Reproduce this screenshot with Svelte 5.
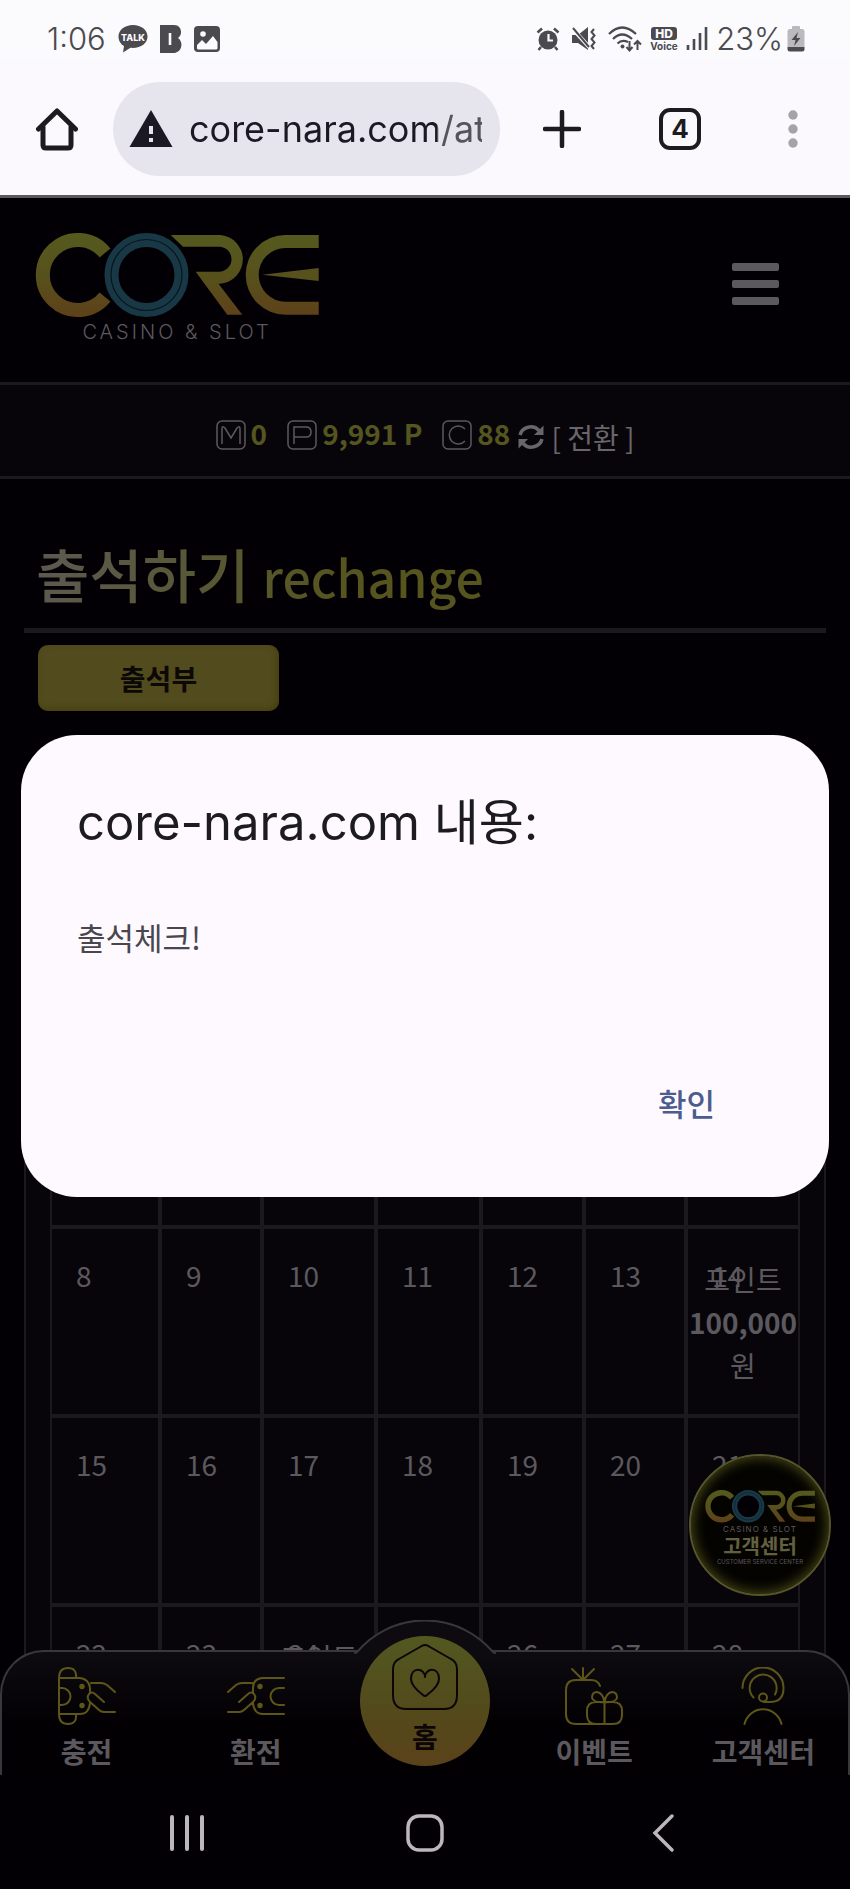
<script lang="ts">
  interface Day {
    date: number;
    bonus?: string;
  }

  const WEEKDAYS = ['일', '월', '화', '수', '목', '금', '토'];
  const COL_WIDTHS = [110, 102, 114, 105, 103, 102, 114];
  const COL_TOTAL = COL_WIDTHS.reduce((a, b) => a + b, 0);
  const BONUS: Record<number, string> = { 14: '100,000', 24: '100,000' };

  const weeks: Day[][] = [0, 1, 2, 3].map((week) =>
    WEEKDAYS.map((_, i) => {
      const date = week * 7 + i + 1;
      return { date, bonus: BONUS[date] };
    })
  );

  let url = $state('core-nara.com/at');
  let dialogOpen = $state(true);
</script>

{#snippet coreLogo(id: string)}
  <svg class="core-logo" viewBox="0 0 284 84" role="img" aria-label="CORE">
    <defs>
      <linearGradient id="{id}-gold" gradientUnits="userSpaceOnUse" x1="0" y1="0" x2="0" y2="84">
        <stop offset="0" stop-color="#555a1e" />
        <stop offset="0.55" stop-color="#57501c" />
        <stop offset="1" stop-color="#5f4019" />
      </linearGradient>
    </defs>
    <path d="M70 20A35 35 0 1 0 70 64" fill="none" stroke="url(#{id}-gold)" stroke-width="14" />
    <g fill="url(#{id}-gold)">
      <path d="M135.700 2H185A24.400 24.400 0 0 1 185 50.700H183.500L207.300 81.700H192.300L160.700 38.700H184A12.500 12.500 0 0 0 184 13.700H148Z" />
      <path d="M283.700 2H250.500A39.850 39.850 0 0 0 250.500 81.700H283.700V68.700H250.500A26.850 26.850 0 0 1 250.500 15H283.700Z" />
      <path d="M227.300 41.700L283.700 35V48Z" />
    </g>
    <circle cx="111.500" cy="42" r="44" fill="#020004" />
    <circle cx="111.500" cy="42" r="35" fill="none" stroke="#193845" stroke-width="14" />
    <circle cx="111.500" cy="42" r="35.500" fill="none" stroke="#07161d" stroke-width="1.200" />
  </svg>
{/snippet}

<div class="screen">
  <header class="status-bar">
    <div class="status-group">
      <span class="clock">1:06</span>
      <svg class="talk" width="30" height="28" viewBox="0 0 30 28" aria-hidden="true">
        <path d="M15 0C6.700 0 .500 5 .500 11.500c0 4.500 2.300 7.600 5.500 9.600L5 27.500l7.500-4.700c9.500 1 17-4.100 17-11.300C29.500 5 23.300 0 15 0Z" fill="#4b4a4e" />
        <text x="15" y="15.500" text-anchor="middle" font-size="9" font-weight="800" fill="#fcfbfe">TALK</text>
      </svg>
      <svg class="bank" width="22" height="28" viewBox="0 0 22 28" aria-hidden="true">
        <path d="M0 0H14C22 0 23 10 18 13C24 17 22 28 13 28H0Z" fill="#4b4a4e" />
        <path d="M10 8V20" stroke="#fcfbfe" stroke-width="2.600" />
      </svg>
      <svg width="26" height="26" viewBox="0 0 26 26" aria-hidden="true">
        <rect width="26" height="26" rx="4" fill="#4b4a4e" />
        <circle cx="9" cy="8" r="2.800" fill="#fcfbfe" />
        <path d="M3 19L8 14L12 18L19 10L23.500 16V22Q23.500 23.500 22 23.500H4.500Q3 23.500 3 22Z" fill="#fcfbfe" />
      </svg>
    </div>
    <div class="status-group right">
      <svg class="spaced" width="24" height="24" viewBox="0 0 24 24" aria-hidden="true">
        <circle cx="12" cy="13" r="9.500" fill="#4b4a4e" />
        <path d="M1.500 5.500L6 1.500M22.500 5.500L18 1.500M5 20L2.500 23M19 20L21.500 23" stroke="#4b4a4e" stroke-width="2.500" />
        <path d="M12.500 7V13.500H17" fill="none" stroke="#fcfbfe" stroke-width="2.200" />
      </svg>
      <svg class="spaced" width="24" height="24" viewBox="0 0 24 24" aria-hidden="true">
        <path d="M0 8H6L16 0V23L6 16H0Z" fill="#4b4a4e" />
        <path d="M0 1L18 21" stroke="#fcfbfe" stroke-width="4" />
        <path d="M1 1L17 20" stroke="#4b4a4e" stroke-width="2" />
        <path d="M22 2L19.500 5L22.500 8.500L19.500 12L22.500 15.500L19.500 19L22 22" fill="none" stroke="#4b4a4e" stroke-width="2" />
      </svg>
      <svg width="34" height="26" viewBox="0 0 34 26" aria-hidden="true">
        <path d="M1 8Q14 -5 28 8M5 13Q14 4 24 13M9.500 17.500Q14 13 20 16" fill="none" stroke="#4b4a4e" stroke-width="2.300" />
        <circle cx="14.500" cy="20.500" r="2" fill="#4b4a4e" />
        <path d="M21.500 15V24M18.500 21L21.500 24.500L24.500 21M29.500 24V15M26 18.500L29.500 15L33 18.500" fill="none" stroke="#4b4a4e" stroke-width="2" />
      </svg>
      <svg width="28" height="26" viewBox="0 0 28 26" aria-hidden="true">
        <rect x="1" y="1" width="26" height="13" rx="3" fill="#4b4a4e" />
        <text x="14" y="12" text-anchor="middle" font-size="12" font-weight="800" fill="#fcfbfe">HD</text>
        <text x="14" y="24" text-anchor="middle" font-size="10" font-weight="700" fill="#4b4a4e">Voice</text>
      </svg>
      <svg width="22" height="24" viewBox="0 0 22 24" aria-hidden="true">
        <path d="M2 18V23M8 12V23M14 6V23M20 0V23" stroke="#4b4a4e" stroke-width="2.600" />
      </svg>
      <span class="clock">23%</span>
      <svg class="battery" width="18" height="26" viewBox="0 0 18 26" aria-hidden="true">
        <path d="M5 3V1Q5 0 6 0H12Q13 0 13 1V3H15Q17.500 3 17.500 5.500V21H.500V5.500Q.500 3 3 3Z" fill="#bbb9be" />
        <path d="M.500 21H17.500V23Q17.500 25.500 15 25.500H3Q.500 25.500 .500 23Z" fill="#4b4a4e" />
        <path d="M11 6L4.500 14H8.500L7 20L13.500 12H9.500Z" fill="#4b4a4e" />
      </svg>
    </div>
  </header>

  <div class="toolbar">
    <button class="icon-button" aria-label="홈페이지">
      <svg width="44" height="44" viewBox="0 0 44 44" fill="none" stroke="#1c1b1f" stroke-width="5" stroke-linecap="round" stroke-linejoin="round">
        <path d="M3.500 22L22 4L40.500 22" />
        <path d="M8 20V38Q8 41 11 41H33Q36 41 36 38V20" />
      </svg>
    </button>
    <div class="address">
      <svg width="44" height="38" viewBox="0 0 44 38" aria-hidden="true">
        <path d="M22 0L43.500 37H.500Z" fill="#1b1a24" />
        <path d="M22 16V24M22 28V32" stroke="#e6e5ed" stroke-width="4" />
      </svg>
      <input class="url" type="text" aria-label="주소" bind:value={url} />
    </div>
    <button class="icon-button" aria-label="새 탭">
      <svg width="38" height="38" viewBox="0 0 38 38">
        <path d="M19 2V36M2 19H36" stroke="#1c1b1f" stroke-width="4.500" stroke-linecap="round" />
      </svg>
    </button>
    <button class="tab-count" aria-label="탭 4개">4</button>
    <button class="icon-button" aria-label="메뉴">
      <svg width="28" height="38" viewBox="0 0 28 38" fill="#a5a3aa">
        <circle cx="14" cy="5" r="4.700" />
        <circle cx="14" cy="19" r="4.700" />
        <circle cx="14" cy="33" r="4.700" />
      </svg>
    </button>
  </div>

  <main class="site">
    <div class="site-header">
      <a class="brand" href="#home">
        {@render coreLogo('brand')}
        <span class="tagline">CASINO &amp; SLOT</span>
      </a>
      <button class="hamburger" aria-label="전체 메뉴">
        <span></span><span></span><span></span>
      </button>
    </div>

    <div class="balance">
      <span class="coin">
        <svg width="30" height="30" viewBox="0 0 30 30" role="img" aria-label="M">
          <rect x="1" y="1" width="28" height="28" rx="5" />
          <path d="M6 24V9Q6 5 9 8L15 18L21 8Q24 5 24 9V24" />
        </svg>
        <b>0</b>
      </span>
      <span class="coin">
        <svg width="30" height="30" viewBox="0 0 30 30" role="img" aria-label="P">
          <rect x="1" y="1" width="28" height="28" rx="5" />
          <path d="M7 24V7H19Q24 7 24 12T19 17H7" />
        </svg>
        <b>9,991 P</b>
      </span>
      <span class="coin">
        <svg width="30" height="30" viewBox="0 0 30 30" role="img" aria-label="C">
          <rect x="1" y="1" width="28" height="28" rx="5" />
          <path d="M23 9A9 9 0 1 0 23 21" />
        </svg>
        <b>88</b>
      </span>
      <button class="convert">
        <svg width="28" height="28" viewBox="0 0 28 28" aria-hidden="true">
          <path d="M3 12A11 10.500 0 0 1 22 7.500M25 16A11 10.500 0 0 1 6 20.500" fill="none" stroke="#69666b" stroke-width="3.500" />
          <path d="M26.500 2.500V12H17ZM1.500 25.500V16H11Z" fill="#69666b" />
        </svg>
        [ 전환 ]
      </button>
    </div>

    <section class="content">
      <h1>출석하기 <small>rechange</small></h1>
      <button class="book">출석부</button>

      <div class="calendar">
        <table>
          <colgroup>
            {#each COL_WIDTHS as width}
              <col style="width: {(width / COL_TOTAL) * 100}%" />
            {/each}
          </colgroup>
          <thead>
            <tr>
              {#each WEEKDAYS as day}
                <th scope="col">{day}</th>
              {/each}
            </tr>
          </thead>
          <tbody>
            {#each weeks as week}
              <tr>
                {#each week as day (day.date)}
                  <td>
                    {day.date}
                    {#if day.bonus}
                      <div class="bonus">포인트 <b>{day.bonus}</b> 원</div>
                    {/if}
                  </td>
                {/each}
              </tr>
            {/each}
          </tbody>
        </table>
      </div>
    </section>

    <a class="support" href="#support">
      {@render coreLogo('support')}
      <span class="support-tag">CASINO &amp; SLOT</span>
      <strong>고객센터</strong>
      <span class="support-sub">CUSTOMER SERVICE CENTER</span>
    </a>

    <nav class="tabs">
      <svg class="bump" width="142" height="34" viewBox="0 0 142 34" aria-hidden="true">
        <path d="M0 34L3 32A89 89 0 0 1 139 32L142 34Z" fill="#0d0b0f" />
        <path d="M0 33Q2 33 3 32A89 89 0 0 1 139 32Q140 33 142 33" fill="none" stroke="#39373b" stroke-width="2" />
      </svg>
      <a href="#deposit">
        <svg width="58" height="58" viewBox="0 0 58 58" aria-hidden="true">
          <path d="M1 11V47M1 11H22Q31 12 32 21V26M32 36Q31 47 22 47H1M1 11Q1 1 10 1T18 11M1 47Q1 57 10 57T18 47M1 21H4A8.500 8.500 0 0 1 4 38H1M33 16H43Q46 16 49 18L57 25M46 35L37 27Q34 24 31 27Q28 31 32 35L41 43Q43 45 46 45H57" />
          <circle cx="24" cy="19.500" r="2.700" class="dot" />
          <circle cx="24" cy="38.500" r="2.700" class="dot" />
        </svg>
        <span>충전</span>
      </a>
      <a href="#withdraw">
        <svg width="58" height="58" viewBox="0 0 58 58" aria-hidden="true">
          <path d="M57 11H35Q26 12 26 21V26M26 36Q27 47 36 47H57M57 21H52A8.500 8.500 0 0 0 52 38H57M25 16H15Q12 16 9 18L1 25M12 35L21 27Q24 24 27 27Q30 31 26 35L17 43Q15 45 12 45H1" />
          <circle cx="33" cy="19.500" r="2.700" class="dot" />
          <circle cx="33" cy="38.500" r="2.700" class="dot" />
        </svg>
        <span>환전</span>
      </a>
      <a class="home" href="#home">
        <svg width="66" height="66" viewBox="0 0 66 66" aria-hidden="true">
          <path d="M28 3Q33 -1 38 3L59 15Q65 18 65 25V51Q65 65 52 65H14Q1 65 1 51V25Q1 18 7 15Z" />
          <path d="M33 33C33 24 19 22 19 35C19 42 27 48 31 51Q33 53 35 51C39 48 47 42 47 35C47 22 33 24 33 33Z" />
        </svg>
        <span>홈</span>
      </a>
      <a href="#event">
        <svg width="58" height="58" viewBox="0 0 58 58" aria-hidden="true">
          <path d="M35 19Q33 13 26 13H11Q1 13 1 23V47Q1 57 11 57H48Q57 57 57 48V44Q57 35 48 35H31Q22 35 22 44V48Q22 57 31 57M18 1V13L7 2M18 13L29 2M39.500 57V35Q29 36 27 31Q27 25 32 25Q38 26 39.500 35Q41 26 47 25Q52 25 52 31Q50 36 39.500 35" />
        </svg>
        <span>이벤트</span>
      </a>
      <a href="#support">
        <svg width="58" height="58" viewBox="0 0 58 58" aria-hidden="true">
          <path d="M8.500 21A20.500 20.500 0 0 1 49.500 21Q49.500 35 36 35H30M19.500 30.500A13.500 13.500 0 1 1 41 27.500M10.500 57A19 19 0 0 1 47.500 57" />
          <circle cx="29" cy="30.500" r="4" />
        </svg>
        <span>고객센터</span>
      </a>
    </nav>
  </main>

  <footer class="system-nav">
    <button class="icon-button" aria-label="최근 앱">
      <svg width="38" height="40" viewBox="0 0 38 40">
        <path d="M4 4V36M19 4V36M34 4V36" stroke="#bbb7bd" stroke-width="4" stroke-linecap="round" />
      </svg>
    </button>
    <button class="icon-button" aria-label="홈">
      <svg width="38" height="38" viewBox="0 0 38 38">
        <rect x="2" y="2" width="34" height="34" rx="11" fill="none" stroke="#bbb7bd" stroke-width="3.500" />
      </svg>
    </button>
    <button class="icon-button" aria-label="뒤로">
      <svg width="24" height="40" viewBox="0 0 24 40">
        <path d="M21 3L4 20L21 37" fill="none" stroke="#bbb7bd" stroke-width="3.500" stroke-linecap="round" />
      </svg>
    </button>
  </footer>

  {#if dialogOpen}
    <div class="overlay">
      <div class="dialog" role="alertdialog" aria-modal="true" aria-labelledby="dialog-title" aria-describedby="dialog-text">
        <h2 id="dialog-title">core-nara.com 내용:</h2>
        <p id="dialog-text">출석체크!</p>
        <button class="confirm" onclick={() => (dialogOpen = false)}>확인</button>
      </div>
    </div>
  {/if}
</div>

<style>
  :global(body) {
    margin: 0;
    background: #020004;
  }

  .screen {
    position: relative;
    display: flex;
    flex-direction: column;
    height: 100vh;
    overflow: hidden;
    background: #020004;
    font-family: 'Noto Sans CJK KR', sans-serif;
  }

  .screen *,
  .screen {
    box-sizing: border-box;
  }

  button {
    padding: 0;
    border: 0;
    background: none;
    font: inherit;
    cursor: pointer;
  }

  a {
    color: inherit;
    text-decoration: none;
  }

  svg {
    display: block;
    flex: none;
  }

  .icon-button {
    display: flex;
  }

  /* phone status bar */
  .status-bar {
    display: flex;
    justify-content: space-between;
    align-items: flex-end;
    flex: none;
    height: 60px;
    padding: 0 45px 0 47px;
    background: #fbfafd;
    color: #4b4a4e;
    font-family: Inter, sans-serif;
  }

  .status-group {
    display: flex;
    align-items: center;
    gap: 12px;
    height: 42px;
  }

  .status-group.right {
    gap: 8px;
  }

  .status-group .spaced {
    margin-right: 4px;
  }

  .clock {
    font-size: 31px;
    line-height: 40px;
    font-weight: 300;
  }

  .status-group.right .battery {
    margin-left: -4px;
  }

  /* browser toolbar */
  .toolbar {
    display: flex;
    align-items: center;
    flex: none;
    height: 138px;
    padding: 3px 43px 0 35px;
    border-bottom: 3px solid #5b595e;
    background: #fbf9fe;
  }

  .address {
    display: flex;
    align-items: center;
    gap: 16px;
    flex: 1;
    min-width: 0;
    height: 94px;
    margin: 0 43px 0 34px;
    padding: 0 18px 0 16px;
    border-radius: 47px;
    background: #e6e5ed;
  }

  .url {
    flex: 1;
    min-width: 0;
    height: 60px;
    padding: 0;
    border: 0;
    outline: 0;
    background: linear-gradient(90deg, #1b1a24 248px, #55545c 248px);
    background-clip: text;
    color: transparent;
    font: 400 36px Inter, sans-serif;
  }

  .tab-count {
    flex: none;
    width: 42px;
    height: 42px;
    margin: 0 78px;
    border: 4px solid #1c1b1f;
    border-radius: 11px;
    color: #1c1b1f;
    font: 700 26px/34px Inter, sans-serif;
  }

  /* site */
  .site {
    position: relative;
    flex: 1;
    min-height: 0;
    overflow: hidden;
    color: #5c595e;
  }

  .site-header {
    display: flex;
    justify-content: space-between;
    align-items: flex-start;
    height: 184px;
    padding: 35px 71px 0 35px;
  }

  .brand {
    display: flex;
    flex-direction: column;
    align-items: center;
    width: 284px;
  }

  .core-logo {
    width: 100%;
  }

  .tagline {
    font: 300 20px/30px Inter, sans-serif;
    letter-spacing: 3px;
  }

  .hamburger {
    display: grid;
    gap: 9px;
    width: 47px;
    margin-top: 30px;
  }

  .hamburger span {
    height: 8px;
    border-radius: 2px;
    background: #5b595d;
  }

  .balance {
    display: flex;
    justify-content: center;
    align-items: center;
    height: 97px;
    padding-top: 8px;
    border-top: 3px solid #1b191d;
    border-bottom: 3px solid #1b191d;
    background: #08050a;
    font-size: 28px;
    line-height: 40px;
  }

  .coin {
    display: flex;
    align-items: center;
    gap: 5px;
    margin-right: 20px;
  }

  .coin:nth-child(3) {
    margin-right: 7px;
  }

  .coin svg {
    fill: none;
    stroke: #5c595e;
    stroke-width: 1.5;
  }

  .coin b {
    padding-bottom: 4px;
    color: #55551f;
  }

  .convert {
    display: flex;
    align-items: center;
    gap: 6px;
    padding-top: 4px;
    color: #69666b;
    font-size: 28px;
    line-height: 36px;
  }

  .content {
    padding: 44px 24px 0;
  }

  h1 {
    margin: 0;
    padding: 8px 12px 10px;
    border-bottom: 5px solid #1b191d;
    font-size: 58px;
    line-height: 84px;
    font-weight: 500;
    color: transparent;
    background: linear-gradient(90deg, #5c5a52 0, #56572e 220px, #56541f 320px);
    background-clip: text;
  }

  h1 small {
    font-size: 50px;
    font-weight: 500;
  }

  .book {
    display: block;
    width: 241px;
    height: 66px;
    margin: 12px 14px 0;
    border-radius: 10px;
    background: #524b1d;
    box-shadow: inset -2px -2px 6px #45400f;
    color: #0c0806;
    font-size: 28px;
    font-weight: 700;
  }

  .calendar {
    margin-top: 221px;
    padding: 24px;
    border: 2px solid #1b191d;
    background: #08050a;
  }

  table {
    width: 100%;
    table-layout: fixed;
    border-spacing: 0;
    font-size: 28px;
    line-height: 40px;
  }

  th {
    height: 80px;
    padding: 0;
    border: 2px solid #1b191d;
    font-weight: 400;
  }

  td {
    position: relative;
    height: 189px;
    padding: 26px 0 0 24px;
    border: 2px solid #1b191d;
    vertical-align: top;
  }

  .bonus {
    position: absolute;
    inset: 0;
    padding-top: 29px;
    line-height: 43px;
    text-align: center;
  }

  /* floating support badge */
  .support {
    position: absolute;
    right: 19px;
    bottom: 179px;
    display: flex;
    flex-direction: column;
    align-items: center;
    width: 142px;
    height: 142px;
    padding: 34px 14px 0;
    border: 2px solid #55552a;
    border-radius: 50%;
    background: #040300;
    box-shadow: inset 0 0 14px #5a5b1c;
  }

  .support-tag {
    font: 400 8px/12px Inter, sans-serif;
    letter-spacing: 1px;
  }

  .support strong {
    color: #62603f;
    font-size: 20px;
    line-height: 22px;
  }

  .support-sub {
    font: 400 6px/10px Inter, sans-serif;
    white-space: nowrap;
  }

  /* bottom tabs */
  .tabs {
    position: absolute;
    inset: auto 0 0;
    display: grid;
    grid-template-columns: repeat(5, 1fr);
    height: 125px;
    border: 2px solid #39373b;
    border-bottom: 0;
    border-radius: 44px 44px 0 0;
    background: linear-gradient(#0d0b0f, #030004 60%);
    font-size: 28px;
    line-height: 40px;
    font-weight: 700;
  }

  .tabs a {
    display: flex;
    flex-direction: column;
    align-items: center;
    gap: 6px;
    padding-top: 15px;
    white-space: nowrap;
  }

  .tabs a svg {
    fill: none;
    stroke: #5e5619;
    stroke-width: 2;
    stroke-linecap: round;
    stroke-linejoin: round;
  }

  .tabs .dot {
    fill: #5e5619;
    stroke: none;
  }

  .bump {
    position: absolute;
    left: 50%;
    bottom: 100%;
    margin: 0 0 -2px -71px;
  }

  .tabs .home {
    position: relative;
    justify-self: center;
    width: 130px;
    height: 130px;
    margin-top: -16px;
    padding-top: 8px;
    border-radius: 50%;
    background: linear-gradient(#525820, #53491b 60%, #5b421a);
    color: #0c0608;
  }

  .tabs .home svg {
    stroke: #0c0608;
  }

  /* system navigation */
  .system-nav {
    display: grid;
    grid-template-columns: repeat(3, 1fr);
    justify-items: center;
    align-items: center;
    flex: none;
    height: 114px;
    padding: 2px 68px 0;
    background: #020004;
  }

  .overlay {
    position: absolute;
    inset: 0;
    display: flex;
    align-items: center;
    padding: 42px 21px 0;
  }

  .dialog {
    display: flex;
    flex-direction: column;
    width: 100%;
    padding: 54px 56px 72px;
    border-radius: 56px;
    background: #fdf9fe;
    color: #1c1b1f;
  }

  h2 {
    margin: 0;
    font: 400 49px/68px Inter, 'Noto Sans CJK KR', sans-serif;
  }

  .dialog p {
    margin: 58px 0 122px;
    color: #49474d;
    font-size: 31px;
    line-height: 44px;
  }

  .confirm {
    align-self: flex-end;
    margin-right: 58px;
    color: #4c5c8e;
    font-size: 31px;
    line-height: 44px;
    font-weight: 500;
  }
</style>
